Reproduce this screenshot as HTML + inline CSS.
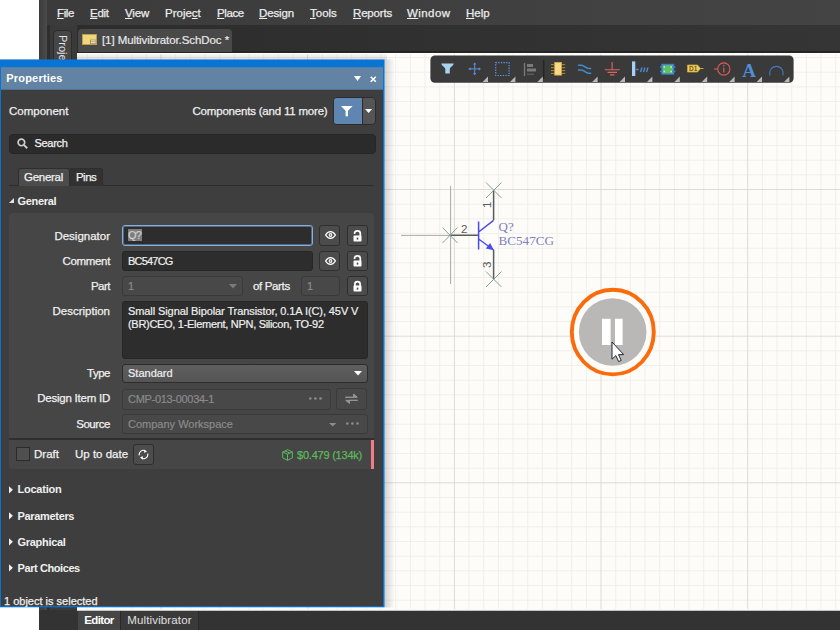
<!DOCTYPE html>
<html>
<head>
<meta charset="utf-8">
<title>Multivibrator.SchDoc</title>
<style>
*{box-sizing:border-box;margin:0;padding:0}
html,body{width:840px;height:630px;overflow:hidden;background:#fff}
body{position:relative;font-family:"Liberation Sans",sans-serif;font-size:11px;color:#e6e6e6}
.abs{position:absolute}
#app{left:39px;top:0;width:801px;height:630px;background:#333}
#frameL{left:39px;top:0;width:9px;height:630px;background:linear-gradient(90deg,#3c3c3c,#4a4a4a 85%,#3a3a3a)}
#menubar{left:47px;top:0;width:793px;height:25px;background:linear-gradient(90deg,#3b3b3b,#444)}
.mi{position:absolute;top:5.5px;font-size:11.5px;color:#ececec;-webkit-text-stroke-width:0.25px;white-space:nowrap;line-height:15px}
.mi u{text-decoration:underline;text-underline-offset:1px}
#tabbar{left:47px;top:25px;width:793px;height:28px;background:linear-gradient(90deg,#2c2c2c,#353535);border-bottom:2px solid #252525}
#projtab{left:53px;top:30px;width:19px;height:40px;background:#464646;border:1px solid #2c2c2c;border-radius:4px 4px 0 0}
#projtab span{position:absolute;left:1.5px;top:3.5px;writing-mode:vertical-rl;font-size:11px;color:#e4e4e4;white-space:nowrap;line-height:14px}
#doctab{left:78px;top:29px;width:154px;height:23px;background:#494949;border-radius:4px 4px 0 0}
#doctab span{-webkit-text-stroke-width:0.2px;position:absolute;left:24px;top:3.5px;letter-spacing:-0.08px;font-size:11.5px;color:#e8e8e8;white-space:nowrap;line-height:15px}
#sheet{left:77px;top:53px;width:763px;height:557px;background:#fdfcf8;overflow:hidden}
#botbar{left:39px;top:610px;width:801px;height:20px;background:#333}
#toolbar{left:431px;top:56px;width:363px;height:27px;background:#3a3a3a;border-radius:4px}
.bt{position:absolute;top:611px;height:19px;font-size:11.5px;line-height:19px;text-align:center;white-space:nowrap}
/* panel */
#panel{left:0;top:0;width:400px;height:620px}
#phead{left:1px;top:67px;width:382px;height:23px}
#phead b{position:absolute;left:5.2px;top:4px;font-size:11px;color:#fff;line-height:15px}
.lbl{position:absolute;font-size:11.5px;color:#f0f0f0;-webkit-text-stroke-width:0.25px;white-space:nowrap;line-height:15px}
.r{text-align:right;width:105px;left:5px}
.inp{position:absolute;background:#2d2d2d;border:1px solid #262626;border-radius:3px;font-size:11px;color:#f0f0f0;-webkit-text-stroke-width:0.2px;white-space:nowrap;line-height:14px;padding:2px 0 0 5px}
.dis{background:#484848;border-color:#3a3a3a;color:#8a8a8a}
.btn{position:absolute;background:#4c4c4c;border:1px solid #2e2e2e;border-radius:3px}
.sec{position:absolute;left:17.6px;font-size:11px;font-weight:bold;color:#f0f0f0;white-space:nowrap;line-height:15px}
.tri{position:absolute;left:9px;width:0;height:0;border-left:4px solid #f0f0f0;border-top:3.5px solid transparent;border-bottom:3.5px solid transparent}
</style>
</head>
<body>
<div id="app" class="abs"></div>
<div id="frameL" class="abs"></div>
<div id="menubar" class="abs"></div>
<div id="tabbar" class="abs"></div>
<div class="abs" style="left:47px;top:25px;width:30px;height:605px;background:linear-gradient(90deg,#2e2e2e 0,#2e2e2e 3px,#3a3a3a 3px)"></div>
<!-- menu items -->
<span class="mi" style="letter-spacing:-0.39px;left:57px"><u>F</u>ile</span>
<span class="mi" style="letter-spacing:-0.28px;left:90px"><u>E</u>dit</span>
<span class="mi" style="letter-spacing:-0.18px;left:125px"><u>V</u>iew</span>
<span class="mi" style="left:165px">Proje<u>c</u>t</span>
<span class="mi" style="letter-spacing:-0.42px;left:217px"><u>P</u>lace</span>
<span class="mi" style="letter-spacing:-0.14px;left:259px"><u>D</u>esign</span>
<span class="mi" style="left:310px"><u>T</u>ools</span>
<span class="mi" style="letter-spacing:-0.18px;left:353px"><u>R</u>eports</span>
<span class="mi" style="letter-spacing:0.43px;left:407px"><u>W</u>indow</span>
<span class="mi" style="left:466px"><u>H</u>elp</span>

<div id="projtab" class="abs"><span>Projects</span></div>
<div id="doctab" class="abs">
  <svg class="abs" style="left:4px;top:5px" width="15" height="11" viewBox="0 0 15 11"><rect x="0.5" y="0.5" width="14" height="10" fill="#f0d77c" stroke="#b99f50"/><rect x="8" y="5.6" width="6" height="4.4" fill="#a8954f"/><rect x="9" y="6.4" width="4.6" height="1" fill="#f4efe0"/><rect x="9" y="8.2" width="4.6" height="1" fill="#f4efe0"/></svg>
  <span>[1] Multivibrator.SchDoc *</span>
</div>

<div id="sheet" class="abs"><div class="abs" style="left:0;top:0;width:763px;height:1px;background:#fff;z-index:2"></div>
<svg width="763" height="557" viewBox="77 53 763 557" style="position:absolute;left:0;top:0">
  <path d="M87.7 53V610M102.4 53V610M117.0 53V610M131.7 53V610M146.4 53V610M175.7 53V610M190.4 53V610M205.0 53V610M219.7 53V610M234.4 53V610M249.0 53V610M263.7 53V610M278.4 53V610M293.0 53V610M322.4 53V610M337.0 53V610M351.7 53V610M366.4 53V610M381.0 53V610M395.7 53V610M410.4 53V610M425.0 53V610M439.7 53V610M469.0 53V610M483.7 53V610M498.4 53V610M513.0 53V610M527.7 53V610M542.4 53V610M557.0 53V610M571.7 53V610M586.4 53V610M615.7 53V610M630.4 53V610M645.0 53V610M659.7 53V610M674.4 53V610M689.0 53V610M703.7 53V610M718.4 53V610M733.0 53V610M762.4 53V610M777.0 53V610M791.7 53V610M806.4 53V610M821.0 53V610M835.7 53V610M77 57.5H840M77 72.2H840M77 86.8H840M77 101.5H840M77 116.2H840M77 130.8H840M77 145.5H840M77 160.2H840M77 174.8H840M77 204.2H840M77 218.8H840M77 233.5H840M77 248.2H840M77 262.8H840M77 277.5H840M77 292.2H840M77 306.8H840M77 321.5H840M77 350.8H840M77 365.5H840M77 380.2H840M77 394.8H840M77 409.5H840M77 424.2H840M77 438.8H840M77 453.5H840M77 468.2H840M77 497.5H840M77 512.2H840M77 526.8H840M77 541.5H840M77 556.2H840M77 570.8H840M77 585.5H840M77 600.2H840" stroke="#f0efeb" stroke-width="1" fill="none"/>
  <path d="M161.0 53V610M307.7 53V610M454.4 53V610M601.0 53V610M747.7 53V610M77 189.5H840M77 336.2H840M77 482.8H840" stroke="#dddcd8" stroke-width="1" fill="none"/>

  <!-- crosshair -->
  <path d="M401 235.4H450M450.6 186V284" stroke="#a9aaa8" stroke-width="1" fill="none"/>
  <!-- pins -->
  <path d="M450 235.3H478.5M493.6 190.2V220M493.6 250V279.3" stroke="#5a5a5a" stroke-width="1.5" fill="none"/>
  <!-- pin end crosses -->
  <path d="M442.5 227.5L457.5 243M457.5 227.5L442.5 243M486 182.5L501.5 198M501.5 182.5L486 198M486 271.5L501.5 287M501.5 271.5L486 287" stroke="#86a09a" stroke-width="1" fill="none"/>
  <!-- transistor body -->
  <path d="M478.6 221.5V249.5M478.6 232L493.6 220.3M478.6 239L493.6 250" stroke="#4a4af0" stroke-width="1.5" fill="none"/>
  <path d="M493.8 250.2L485.8 248.6L490.2 243Z" fill="#4a4af0"/>
  <text x="461" y="233" font-family="Liberation Sans, sans-serif" font-size="11.5" fill="#5a5a5a">2</text>
  <text transform="translate(490.5,208) rotate(-90)" font-family="Liberation Sans, sans-serif" font-size="11.5" fill="#5a5a5a">1</text>
  <text transform="translate(490.5,268) rotate(-90)" font-family="Liberation Sans, sans-serif" font-size="11.5" fill="#5a5a5a">3</text>
  <text x="498.5" y="230.8" font-family="Liberation Serif, serif" font-size="13" fill="#7f7fc0">Q?</text>
  <text x="498.5" y="245.2" font-family="Liberation Serif, serif" font-size="13" fill="#7f7fc0" textLength="55.5" lengthAdjust="spacingAndGlyphs">BC547CG</text>
  <!-- pause button -->
  <ellipse cx="612.8" cy="332.1" rx="41" ry="42.3" fill="#fdfcf8" stroke="#fb6a0b" stroke-width="3.9"/>
  <circle cx="612.7" cy="332" r="33.8" fill="#b9b8b6"/>
  <rect x="602" y="318.8" width="8.6" height="26.2" fill="#fff"/>
  <rect x="615" y="318.8" width="7.6" height="26.2" fill="#fff"/>
  <!-- cursor -->
  <path d="M612 342V359.2L615.9 355.6L618.6 361.6L621.2 360.4L618.5 354.6H623.7Z" fill="#fff" stroke="#1f2a3a" stroke-width="1" stroke-linejoin="miter"/>
</svg>
</div>


<svg class="abs" style="left:430px;top:55px" width="364" height="28" viewBox="430 55 364 28">
  <rect x="430.4" y="55.4" width="363.2" height="27.3" rx="4.5" fill="#3a3a3a"/>
  <!-- filter -->
  <path d="M441.3 63.6H453.7C453.2 66.5 449.8 67 449.8 69.5V73.5H445.3V69.5C445.3 67 441.8 66.5 441.3 63.6Z" fill="#a6d3ee"/>
  <!-- plus -->
  <path d="M474.7 63.5V74.3M469.4 68.9H480" stroke="#5d8fdc" stroke-width="1" fill="none"/><path d="M474.7 62.4L476.4 64.6H473ZM474.7 75.3L476.4 73.1H473ZM468.3 68.9L470.5 67.2V70.6ZM481 68.9L478.8 67.2V70.6Z" fill="#5d8fdc"/>
  <!-- dashed rect -->
  <rect x="495.7" y="62.7" width="13.4" height="12.8" fill="none" stroke="#5d8fdc" stroke-width="1.2" stroke-dasharray="1.4 1.2"/>
  <!-- align -->
  <path d="M524.5 63V76" stroke="#7a7a7a" stroke-width="1.4"/><rect x="527" y="64" width="6" height="3" fill="#7a7a7a"/><rect x="527" y="68.5" width="9" height="3" fill="#7a7a7a"/><path d="M527 74.2H534" stroke="#6a6a6a" stroke-width="1"/>
  <!-- separator -->
  <path d="M543.7 60V79" stroke="#242424" stroke-width="1.4"/>
  <!-- component -->
  <rect x="554.7" y="62.4" width="6.8" height="12.7" fill="#f8d98c" stroke="#e0a840" stroke-width="0.8"/>
  <path d="M551 64.6H554.5M551 67.7H554.5M551 70.6H554.5M551 73.4H554.5M561.7 64.6H565.2M561.7 67.7H565.2M561.7 70.6H565.2M561.7 73.4H565.2" stroke="#b8962e" stroke-width="0.9"/>
  <!-- wire -->
  <path d="M578 65.2H581.2C584.8 65.2 585.2 68.5 588.6 68.5H591.2M578 70H581.2C584.8 70 585.2 73.3 588.6 73.3H591.2" stroke="#3f8ad0" stroke-width="1.5" fill="none"/>
  <!-- gnd -->
  <path d="M612.1 62V69.6M604.7 69.8H619.7M607.5 72.4H617M610 74.9H614.5" stroke="#e0645c" stroke-width="1.1" fill="none"/>
  <!-- bus -->
  <rect x="632" y="61.4" width="3.3" height="14.6" fill="#a4d0f4"/>
  <path d="M636 69.5H638.5M640.5 72L642 67.5M643.5 72L645 67.5M646.5 72L648 67.5" stroke="#4f8fd6" stroke-width="1.3" fill="none"/>
  <!-- sheet symbol -->
  <rect x="662" y="64.5" width="11.5" height="9.5" fill="#58c26f" stroke="#3f7fd0" stroke-width="1.4"/>
  <path d="M660 67H663.5M660 71.5H663.5M672 67H675.5M672 71.5H675.5" stroke="#3f7fd0" stroke-width="1.3"/>
  <rect x="663.4" y="66.2" width="1.6" height="1.6" fill="#f2e36a"/><rect x="663.4" y="70.7" width="1.6" height="1.6" fill="#f2e36a"/><rect x="670.4" y="66.2" width="1.6" height="1.6" fill="#f2e36a"/><rect x="670.4" y="70.7" width="1.6" height="1.6" fill="#f2e36a"/>
  <!-- port D1 -->
  <path d="M687.5 65H697.5L700.5 68.5L697.5 72H687.5Z" fill="#f1cf5e" stroke="#caa63c" stroke-width="0.8"/><path d="M700.5 68.5H703.5" stroke="#caa63c" stroke-width="1"/>
  <text x="689" y="71.3" font-family="Liberation Sans, sans-serif" font-size="6.5" font-weight="bold" fill="#6b5a20">D1</text>
  <!-- info -->
  <circle cx="723.8" cy="69" r="6.1" fill="none" stroke="#e05a55" stroke-width="1.1"/><path d="M714.2 69H717.7" stroke="#e05a55" stroke-width="1.1"/><path d="M723.8 67.6V72.6" stroke="#e05a55" stroke-width="1.2"/><circle cx="723.8" cy="65.6" r="0.8" fill="#e05a55"/>
  <!-- A -->
  <text x="742.3" y="77" font-family="Liberation Serif, serif" font-size="19" font-weight="bold" fill="#4f8fd6">A</text>
  <!-- arc -->
  <path d="M770 75.5A6.8 6.8 0 1 1 782.8 75.5" fill="none" stroke="#3f78c0" stroke-width="1.1"/>
  <!-- corner triangles -->
  <path d="M482.6 82H488.0V76.6Z" fill="#b8b8b8"/><path d="M510.0 82H515.4V76.6Z" fill="#b8b8b8"/><path d="M537.4 82H542.8V76.6Z" fill="#b8b8b8"/><path d="M592.2 82H597.6V76.6Z" fill="#b8b8b8"/><path d="M619.6 82H625.0V76.6Z" fill="#b8b8b8"/><path d="M647.0 82H652.4V76.6Z" fill="#b8b8b8"/><path d="M674.4 82H679.8V76.6Z" fill="#b8b8b8"/><path d="M701.8 82H707.2V76.6Z" fill="#b8b8b8"/><path d="M729.2 82H734.6V76.6Z" fill="#b8b8b8"/><path d="M756.6 82H762.0V76.6Z" fill="#b8b8b8"/><path d="M784.0 82H789.4V76.6Z" fill="#b8b8b8"/>
  
</svg>

<div id="botbar" class="abs"></div>
<div class="abs" style="left:77px;top:609px;width:763px;height:2px;background:linear-gradient(#f6f5f2,#fff 50%,#8a8a8a)"></div>
<div class="bt" style="letter-spacing:-0.64px;left:78px;width:42px;background:#464646;color:#fff;font-weight:bold">Editor</div>
<div class="bt" style="letter-spacing:0.13px;left:120px;width:79px;background:#3a3a3a;color:#e0e0e0;border-left:1px solid #2a2a2a;border-right:1px solid #2a2a2a">Multivibrator</div>

<!-- PANEL -->
<svg id="panel" class="abs" width="400" height="620" viewBox="0 0 400 620">
  <defs><linearGradient id="psh" x1="0" x2="1" y1="0" y2="0"><stop offset="0" stop-color="#000" stop-opacity="0.17"/><stop offset="1" stop-color="#000" stop-opacity="0"/></linearGradient></defs>
  <rect x="384.6" y="59.4" width="10" height="548" fill="url(#psh)"/>
  <linearGradient id="psh2" x1="0" x2="0" y1="1" y2="0"><stop offset="0" stop-color="#000" stop-opacity="0.12"/><stop offset="1" stop-color="#000" stop-opacity="0.02"/></linearGradient>
  <rect x="77" y="54" width="310" height="5.4" fill="url(#psh2)"/>
  <rect x="0" y="59.4" width="384.6" height="547.9" fill="#0a74d4"/>
  <rect x="1" y="67.2" width="382" height="22.6" fill="#6283a4"/>
  <rect x="1" y="89.8" width="382" height="516.3" fill="#3e3e3e"/>
</svg>
<div id="phead" class="abs"><b style="letter-spacing:0.21px">Properties</b></div>

<!-- header buttons -->
<svg class="abs" style="left:354px;top:76px" width="8" height="6" viewBox="0 0 8 6"><path d="M0 0H7L3.5 5Z" fill="#fff"/></svg>
<svg class="abs" style="left:370px;top:75.8px" width="7" height="7" viewBox="0 0 7 7"><path d="M0.7 0.7L5.8 5.8M5.8 0.7L0.7 5.8" stroke="#fff" stroke-width="1.6"/></svg>

<span class="lbl" style="left:9px;top:104px">Component</span>
<span class="lbl" style="letter-spacing:-0.2px;left:192.5px;top:104px">Components (and 11 more)</span>
<div class="abs" style="left:333.3px;top:97px;width:42.4px;height:28px;background:#555;border:1px solid #2c2c2c;border-radius:4px;overflow:hidden">
  <div class="abs" style="left:0;top:0;width:28.4px;height:26px;background:#5f86b0;border-right:1px solid #2c2c2c"></div>
  <svg class="abs" style="left:7.2px;top:8px" width="12" height="11" viewBox="0 0 12 11"><path d="M0 0H11.6L7 4.8V10.2H4.6V4.8Z" fill="#fff"/></svg>
  <svg class="abs" style="left:30.7px;top:11.2px" width="8" height="5" viewBox="0 0 8 5"><path d="M0 0H7.2L3.6 4Z" fill="#fff"/></svg>
</div>

<!-- search -->
<div class="abs" style="left:9px;top:134px;width:367px;height:20px;background:#2b2b2b;border:1px solid #262626;border-radius:4px"></div>
<svg class="abs" style="left:16.5px;top:138.4px" width="11" height="11" viewBox="0 0 10 10"><circle cx="4" cy="4" r="3" fill="none" stroke="#cfcfcf" stroke-width="1.5"/><path d="M6.2 6.2L9.3 9.3" stroke="#cfcfcf" stroke-width="1.7"/></svg>
<span class="lbl" style="letter-spacing:-0.3px;left:34.5px;top:136px;font-size:11px">Search</span>

<!-- tabs -->
<div class="abs" style="left:9px;top:185px;width:365px;height:1px;background:#2c2c2c"></div>
<div class="abs" style="left:18px;top:168px;width:52px;height:18px;background:#4c4c4c;border:1px solid #2e2e2e;border-bottom:none;border-radius:3px 3px 0 0"></div>
<div class="abs" style="left:70px;top:168px;width:33px;height:18px;background:#323232;border:1px solid #2e2e2e;border-left:none;border-bottom:none;border-radius:0 3px 0 0"></div>
<span class="lbl" style="letter-spacing:-0.27px;left:24px;top:170px">General</span>
<span class="lbl" style="letter-spacing:-0.55px;left:76px;top:170px">Pins</span>

<!-- General section -->
<svg class="abs" style="left:9px;top:198px" width="5" height="5" viewBox="0 0 5 5"><path d="M5 0V5H0Z" fill="#e6e6e6"/></svg>
<span class="sec" style="letter-spacing:-0.35px;top:194px">General</span>
<div class="abs" style="left:9px;top:213px;width:365px;height:256px;background:#464646;border-radius:4px"></div>
<div class="abs" style="left:9px;top:438px;width:365px;height:1.5px;background:#2f2f2f"></div>

<span class="lbl r" style="top:229px">Designator</span>
<div class="inp" style="left:122px;top:225px;width:191px;height:21px;border:1px solid #85b0de;box-shadow:inset 0 0 0 1px rgba(133,176,222,0.45);padding:1.5px 0 0 5px"><span style="background:#7e7e7e;color:#d0d0d0;letter-spacing:-0.8px;padding-right:0.8px">Q?</span></div>
<div class="btn" style="left:319px;top:225px;width:21px;height:21px"></div>
<div class="btn" style="left:347px;top:225px;width:21px;height:21px"></div>

<span class="lbl r" style="letter-spacing:-0.35px;top:254px">Comment</span>
<div class="inp" style="letter-spacing:-0.8px;left:122px;top:251px;width:191px;height:20px">BC547CG</div>
<div class="btn" style="left:319px;top:251px;width:21px;height:20px"></div>
<div class="btn" style="left:347px;top:251px;width:21px;height:20px"></div>

<span class="lbl r" style="letter-spacing:-0.5px;top:279px">Part</span>
<div class="inp dis" style="left:122px;top:276px;width:121px;height:20px">1</div>
<svg class="abs" style="left:229px;top:284px" width="8" height="5" viewBox="0 0 8 5"><path d="M0 0H8L4 4.5Z" fill="#7a7a7a"/></svg>
<span class="lbl" style="letter-spacing:-0.35px;left:253px;top:279px">of Parts</span>
<div class="inp dis" style="left:301px;top:276px;width:39px;height:20px">1</div>
<div class="btn" style="left:347px;top:276px;width:21px;height:20px"></div>

<svg class="abs" style="left:324.5px;top:231px" width="11" height="8" viewBox="0 0 11 8"><path d="M0.6 4C2 1.6 3.7 0.7 5.5 0.7S9 1.6 10.4 4C9 6.4 7.3 7.3 5.5 7.3S2 6.4 0.6 4Z" fill="none" stroke="#fff" stroke-width="1.3"/><circle cx="5.5" cy="4" r="1.9" fill="#fff"/><circle cx="5.5" cy="4" r="0.8" fill="#4a4a4a"/></svg>
<svg class="abs" style="left:352.5px;top:229.5px" width="9" height="12" viewBox="0 0 9 12"><path d="M1.6 3.9V3.3C1.6 1.6 2.7 0.9 4.4 0.9S7.3 1.8 7.3 3.5V6" fill="none" stroke="#fff" stroke-width="1.7"/><rect x="0.5" y="5.6" width="8" height="6" rx="0.8" fill="#fff"/><rect x="3.7" y="7.6" width="1.6" height="2" fill="#4a4a4a"/></svg>
<svg class="abs" style="left:324.5px;top:256.5px" width="11" height="8" viewBox="0 0 11 8"><path d="M0.6 4C2 1.6 3.7 0.7 5.5 0.7S9 1.6 10.4 4C9 6.4 7.3 7.3 5.5 7.3S2 6.4 0.6 4Z" fill="none" stroke="#fff" stroke-width="1.3"/><circle cx="5.5" cy="4" r="1.9" fill="#fff"/><circle cx="5.5" cy="4" r="0.8" fill="#4a4a4a"/></svg>
<svg class="abs" style="left:352.5px;top:255px" width="9" height="12" viewBox="0 0 9 12"><path d="M1.6 3.9V3.3C1.6 1.6 2.7 0.9 4.4 0.9S7.3 1.8 7.3 3.5V6" fill="none" stroke="#fff" stroke-width="1.7"/><rect x="0.5" y="5.6" width="8" height="6" rx="0.8" fill="#fff"/><rect x="3.7" y="7.6" width="1.6" height="2" fill="#4a4a4a"/></svg>
<svg class="abs" style="left:352.5px;top:280px" width="9" height="12" viewBox="0 0 9 12"><path d="M1.9 6.5V4C1.9 2.3 2.9 1.6 4.5 1.6S7.1 2.3 7.1 4V6.5" fill="none" stroke="#fff" stroke-width="1.7"/><rect x="0.5" y="5.6" width="8" height="6" rx="0.8" fill="#fff"/><rect x="3.7" y="7.6" width="1.6" height="2" fill="#4a4a4a"/></svg>
<span class="lbl r" style="top:304px">Description</span>
<div class="inp" style="left:122px;top:301px;width:246px;height:58px;white-space:nowrap;line-height:13px;padding-top:3px"><span style="letter-spacing:-0.09px">Small Signal Bipolar Transistor, 0.1A I(C), 45V V</span><br><span style="letter-spacing:-0.3px">(BR)CEO, 1-Element, NPN, Silicon, TO-92</span></div>

<span class="lbl r" style="letter-spacing:-0.5px;top:366px">Type</span>
<div class="inp" style="left:122px;top:364px;width:246px;height:19px;background:linear-gradient(#5e5e5e,#555);border-color:#2c2c2c;padding-top:1px">Standard</div>
<svg class="abs" style="left:354px;top:371px" width="8" height="5" viewBox="0 0 8 5"><path d="M0 0H8L4 4.5Z" fill="#fff"/></svg>

<span class="lbl r" style="letter-spacing:-0.23px;top:391px">Design Item ID</span>
<div class="inp dis" style="letter-spacing:-0.3px;left:122px;top:389px;width:209px;height:20.5px">CMP-013-00034-1</div>
<div class="btn" style="left:335.7px;top:388px;width:31.7px;height:21.5px;background:#484848;border-color:#3a3a3a"></div>

<span class="lbl r" style="letter-spacing:-0.44px;top:417px">Source</span>
<div class="inp dis" style="left:122px;top:414px;width:246px;height:20px">Company Workspace</div>

<!-- draft row -->
<div class="abs" style="left:16px;top:447px;width:14px;height:14px;background:#4f4f4f;border:1px solid #2b2b2b"></div>
<span class="lbl" style="left:34px;top:447px">Draft</span>
<span class="lbl" style="left:75px;top:447px">Up to date</span>
<div class="btn" style="left:133px;top:444px;width:21px;height:21px"></div>
<span class="lbl" style="letter-spacing:-0.22px;left:297px;top:448px;font-size:11px;color:#5cb85c">$0.479 (134k)</span>
<div class="abs" style="left:371px;top:439.5px;width:3px;height:29.5px;background:#f07d85"></div>

<svg class="abs" style="left:308.8px;top:397.4px" width="13" height="3" viewBox="0 0 13 3"><circle cx="1.3" cy="1.5" r="1.3" fill="#8c8c8c"/><circle cx="6.4" cy="1.5" r="1.3" fill="#8c8c8c"/><circle cx="11.5" cy="1.5" r="1.3" fill="#8c8c8c"/></svg>
<svg class="abs" style="left:346.2px;top:422.4px" width="13" height="3" viewBox="0 0 13 3"><circle cx="1.3" cy="1.5" r="1.3" fill="#8c8c8c"/><circle cx="6.4" cy="1.5" r="1.3" fill="#8c8c8c"/><circle cx="11.5" cy="1.5" r="1.3" fill="#8c8c8c"/></svg>
<svg class="abs" style="left:329px;top:422.5px" width="8" height="4" viewBox="0 0 8 4"><path d="M0 0H7.4L3.7 3.5Z" fill="#8c8c8c"/></svg>
<svg class="abs" style="left:344.5px;top:393px" width="13" height="11" viewBox="0 0 13 11"><path d="M0.3 4.3H12.3L8.6 1V4.3ZM12.7 7.3H0.7L4.4 10.4V7.3Z" fill="#979797" stroke="#979797" stroke-width="1" stroke-linejoin="miter"/></svg>
<svg class="abs" style="left:138px;top:449px" width="11" height="11" viewBox="0 0 11 11"><path d="M1.3 6.3A4.2 4.2 0 0 1 7.4 1.8M9.7 4.7A4.2 4.2 0 0 1 3.6 9.2" fill="none" stroke="#fff" stroke-width="1.15"/><path d="M6.4 0.5L9 2.7L6 3.7ZM4.6 10.5L2 8.3L5 7.3Z" fill="#fff"/></svg>
<svg class="abs" style="left:282px;top:449px" width="11" height="12" viewBox="0 0 11 12"><path d="M5.5 0.7L10.3 2.9V8.9L5.5 11.3L0.7 8.9V2.9ZM0.7 2.9L5.5 5.2L10.3 2.9M5.5 5.2V11.3M3 1.9L7.9 4.1" fill="none" stroke="#5cb85c" stroke-width="1"/></svg>
<svg class="abs" style="left:8.9px;top:485.7px" width="4" height="8" viewBox="0 0 4 8"><path d="M0 0.2L3.9 3.8L0 7.4Z" fill="#f0f0f0"/></svg><span class="sec" style="letter-spacing:-0.26px;top:482px">Location</span>
<svg class="abs" style="left:8.9px;top:512.2px" width="4" height="8" viewBox="0 0 4 8"><path d="M0 0.2L3.9 3.8L0 7.4Z" fill="#f0f0f0"/></svg><span class="sec" style="letter-spacing:-0.34px;top:509px">Parameters</span>
<svg class="abs" style="left:8.9px;top:538.2px" width="4" height="8" viewBox="0 0 4 8"><path d="M0 0.2L3.9 3.8L0 7.4Z" fill="#f0f0f0"/></svg><span class="sec" style="letter-spacing:-0.31px;top:535px">Graphical</span>
<svg class="abs" style="left:8.9px;top:564.2px" width="4" height="8" viewBox="0 0 4 8"><path d="M0 0.2L3.9 3.8L0 7.4Z" fill="#f0f0f0"/></svg><span class="sec" style="letter-spacing:-0.42px;top:561px">Part Choices</span>
<span class="lbl" style="left:4px;top:594px;font-size:11px">1 object is selected</span>

</body>
</html>
